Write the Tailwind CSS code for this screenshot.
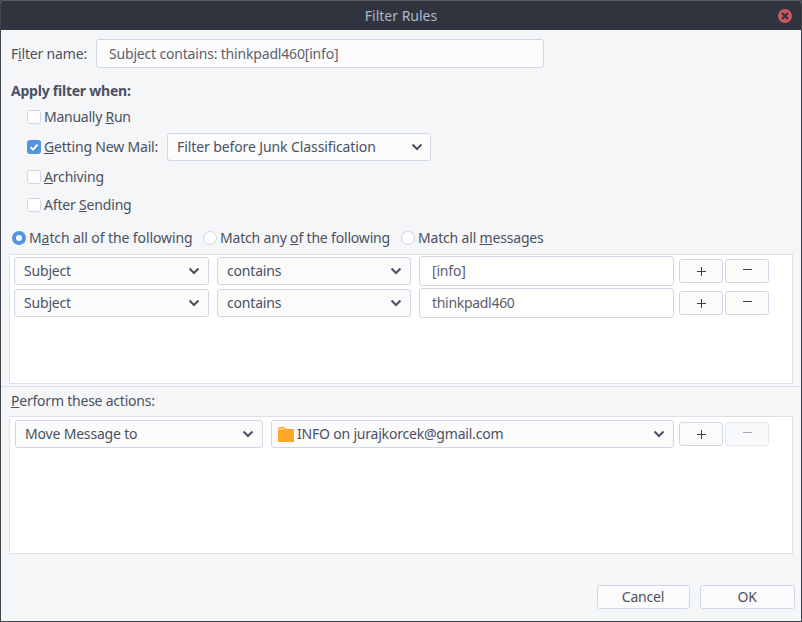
<!DOCTYPE html>
<html><head><meta charset="utf-8"><script src="https://cdn.jsdelivr.net/npm/@tailwindcss/browser@4"></script></head>
<body class="w-[802px] h-[622px] overflow-hidden bg-[#3a3d45]">
<div class="w-[802px] h-[622px] flex flex-col font-['Noto_Sans',sans-serif] text-[14px] leading-[20px] text-[#4b5162] bg-[#f5f6f7] border-x border-b border-[#3f434c] rounded-t-[4px] overflow-hidden">
  <div class="h-[30px] shrink-0 bg-[#2f343f] border-t border-[#5a5d64] flex items-center justify-center relative text-[#afb8c6]">
    <span>Filter Rules</span>
    <div class="absolute right-[9px] top-[8px] w-[14px] h-[14px] rounded-full bg-[#cc575d] flex items-center justify-center">
      <svg width="8" height="8" viewBox="0 0 8 8"><path d="M1 1L7 7M7 1L1 7" stroke="#2f343f" stroke-width="2"/></svg>
    </div>
  </div>
  <div class="flex flex-col grow tracking-[-0.18px]">
    <div class="flex items-center h-[29px] mt-[9px] pl-[10px]">
      <span class="w-[85px]">F<u>i</u>lter name:</span>
      <div class="w-[448px] h-[29px] border border-[#cfd6e6] rounded-[3px] bg-[#fcfcfc] pl-[12px] flex items-center text-[#5c616c]">Subject contains: thinkpadl460[info]</div>
    </div>
    <div class="pl-[10px] mt-[13px] font-bold h-[20px] tracking-[-0.23px]">Apply filter when:</div>
    <div class="flex flex-col pl-[26px] mt-[6px]">
      <div class="flex items-center h-[20px] gap-[3px]"><span class="w-[14px] h-[14px] border border-[#cfd6e6] rounded-[3px] bg-white"></span><span class="tracking-[-0.25px]">Manually <u>R</u>un</span></div>
      <div class="flex items-center h-[28px] mt-[6px]">
        <span class="w-[14px] h-[14px] rounded-[3px] bg-[#5294e2] flex items-center justify-center"><svg width="10" height="10" viewBox="0 0 10 10"><path d="M1.5 5.2L4 7.6L8.5 2.6" fill="none" stroke="white" stroke-width="2"/></svg></span>
        <span class="ml-[3px] w-[123px]"><u>G</u>etting New Mail:</span>
        <div class="w-[264px] h-[28px] border border-[#cfd6e6] rounded-[3px] bg-[#fbfbfc] pl-[9px] pr-[7px] flex items-center justify-between tracking-[-0.1px]"><span>Filter before Junk Classification</span><svg width="12" height="8" viewBox="0 0 12 8"><path d="M1.5 1.5L6 6L10.5 1.5" fill="none" stroke="#4b5162" stroke-width="2"/></svg></div>
      </div>
      <div class="flex items-center h-[20px] mt-[6px] gap-[3px]"><span class="w-[14px] h-[14px] border border-[#cfd6e6] rounded-[3px] bg-white"></span><span><u>A</u>rchiving</span></div>
      <div class="flex items-center h-[20px] mt-[8px] gap-[3px]"><span class="w-[14px] h-[14px] border border-[#cfd6e6] rounded-[3px] bg-white"></span><span>After <u>S</u>ending</span></div>
    </div>
    <div class="flex items-center h-[20px] mt-[13px] pl-[11px]">
      <span class="w-[14px] h-[14px] rounded-full bg-[#5294e2] flex items-center justify-center"><span class="w-[6px] h-[6px] rounded-full bg-white"></span></span>
      <span class="ml-[3px] w-[174px] tracking-[-0.1px]">M<u>a</u>tch all of the following</span>
      <span class="w-[14px] h-[14px] rounded-full border border-[#cfd6e6] bg-white"></span>
      <span class="ml-[3px] w-[181px]">Match any <u>o</u>f the following</span>
      <span class="w-[14px] h-[14px] rounded-full border border-[#cfd6e6] bg-white"></span>
      <span class="ml-[3px]">Match all <u>m</u>essages</span>
    </div>
    <div class="ml-[8px] w-[784px] h-[130px] mt-[6px] bg-white border border-[#dcdfe3] pt-[2px] pl-[4px] flex flex-col gap-[4px]">
      <div class="flex items-center h-[28px] shrink-0">
        <div class="w-[195px] h-[28px] border border-[#cfd6e6] rounded-[3px] bg-[#fbfbfc] pl-[9px] pr-[8px] flex items-center justify-between"><span>Subject</span><svg width="12" height="8" viewBox="0 0 12 8"><path d="M1.5 1.5L6 6L10.5 1.5" fill="none" stroke="#4b5162" stroke-width="2"/></svg></div>
        <div class="w-[194px] h-[28px] ml-[8px] border border-[#cfd6e6] rounded-[3px] bg-[#fbfbfc] pl-[9px] pr-[8px] flex items-center justify-between"><span>contains</span><svg width="12" height="8" viewBox="0 0 12 8"><path d="M1.5 1.5L6 6L10.5 1.5" fill="none" stroke="#4b5162" stroke-width="2"/></svg></div>
        <div class="w-[255px] h-[30px] ml-[8px] border border-[#cfd6e6] rounded-[3px] bg-white pl-[12px] flex items-center text-[#5c616c]">[info]</div>
        <div class="w-[44px] h-[24px] ml-[5px] border border-[#cfd6e6] rounded-[3px] bg-[#fbfbfc] flex items-center justify-center"><svg width="9" height="9" viewBox="0 0 9 9"><path d="M0 4.5H9M4.5 0V9" stroke="#3c4150" stroke-width="1"/></svg></div>
        <div class="w-[44px] h-[24px] ml-[2px] border border-[#cfd6e6] rounded-[3px] bg-[#fbfbfc] flex items-center justify-center"><svg width="9" height="9" viewBox="0 0 9 9"><path d="M0 2.5H9" stroke="#3c4150" stroke-width="1"/></svg></div>
      </div>
      <div class="flex items-center h-[28px] shrink-0">
        <div class="w-[195px] h-[28px] border border-[#cfd6e6] rounded-[3px] bg-[#fbfbfc] pl-[9px] pr-[8px] flex items-center justify-between"><span>Subject</span><svg width="12" height="8" viewBox="0 0 12 8"><path d="M1.5 1.5L6 6L10.5 1.5" fill="none" stroke="#4b5162" stroke-width="2"/></svg></div>
        <div class="w-[194px] h-[28px] ml-[8px] border border-[#cfd6e6] rounded-[3px] bg-[#fbfbfc] pl-[9px] pr-[8px] flex items-center justify-between"><span>contains</span><svg width="12" height="8" viewBox="0 0 12 8"><path d="M1.5 1.5L6 6L10.5 1.5" fill="none" stroke="#4b5162" stroke-width="2"/></svg></div>
        <div class="w-[255px] h-[30px] ml-[8px] border border-[#cfd6e6] rounded-[3px] bg-white pl-[12px] flex items-center text-[#5c616c]"><span class="tracking-[-0.3px]">thinkpadl460</span></div>
        <div class="w-[44px] h-[24px] ml-[5px] border border-[#cfd6e6] rounded-[3px] bg-[#fbfbfc] flex items-center justify-center"><svg width="9" height="9" viewBox="0 0 9 9"><path d="M0 4.5H9M4.5 0V9" stroke="#3c4150" stroke-width="1"/></svg></div>
        <div class="w-[44px] h-[24px] ml-[2px] border border-[#cfd6e6] rounded-[3px] bg-[#fbfbfc] flex items-center justify-center"><svg width="9" height="9" viewBox="0 0 9 9"><path d="M0 2.5H9" stroke="#3c4150" stroke-width="1"/></svg></div>
      </div>
    </div>
    <div class="h-px bg-[#dcdfe3] mt-[2px]"></div>
    <div class="pl-[10px] mt-[4px] h-[20px] tracking-[-0.22px]"><u>P</u>erform these actions:</div>
    <div class="ml-[8px] w-[784px] h-[138px] mt-[5px] bg-white border border-[#dcdfe3] pt-[3px] pl-[5px] flex items-start">
      <div class="w-[248px] h-[28px] border border-[#cfd6e6] rounded-[3px] bg-[#fbfbfc] pl-[9px] pr-[8px] flex items-center justify-between"><span>Move Message to</span><svg width="12" height="8" viewBox="0 0 12 8"><path d="M1.5 1.5L6 6L10.5 1.5" fill="none" stroke="#4b5162" stroke-width="2"/></svg></div>
      <div class="w-[403px] h-[28px] ml-[8px] border border-[#cfd6e6] rounded-[3px] bg-[#fbfbfc] pl-[6px] pr-[8px] flex items-center justify-between">
        <span class="flex items-center gap-[3px] tracking-[-0.2px]"><svg width="16" height="16" viewBox="0 0 16 16"><path d="M0 2.5Q0 1 1.5 1H6L8 3H16V16H0Z" fill="#ffa726"/><path d="M0.5 3H6" stroke="#fff3d9" stroke-width="1"/></svg>INFO on jurajkorcek@gmail.com</span>
        <svg width="12" height="8" viewBox="0 0 12 8"><path d="M1.5 1.5L6 6L10.5 1.5" fill="none" stroke="#4b5162" stroke-width="2"/></svg>
      </div>
      <div class="w-[44px] h-[24px] mt-[2px] ml-[5px] border border-[#cfd6e6] rounded-[3px] bg-[#fbfbfc] flex items-center justify-center"><svg width="9" height="9" viewBox="0 0 9 9"><path d="M0 4.5H9M4.5 0V9" stroke="#3c4150" stroke-width="1"/></svg></div>
      <div class="w-[44px] h-[24px] mt-[2px] ml-[2px] border border-[#e4e7ee] rounded-[3px] bg-[#f9fafb] flex items-center justify-center"><svg width="9" height="9" viewBox="0 0 9 9"><path d="M0 2.5H9" stroke="#a5a8b0" stroke-width="1"/></svg></div>
    </div>
    <div class="flex justify-end mt-[31px] pr-[6px] gap-[10px]">
      <div class="w-[93px] h-[24px] border border-[#cfd6e6] rounded-[3px] bg-[#fbfbfc] flex items-center justify-center pr-[1px]">Cancel</div>
      <div class="w-[95px] h-[24px] border border-[#cfd6e6] rounded-[3px] bg-[#fbfbfc] flex items-center justify-center pr-[1px]">OK</div>
    </div>
  </div>
</div>
</body></html>
